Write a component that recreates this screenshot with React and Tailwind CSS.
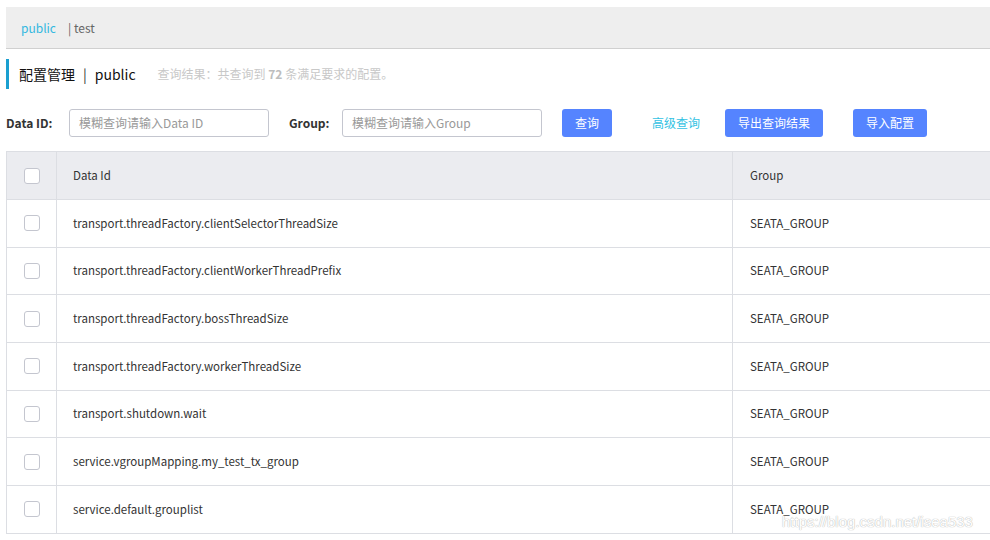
import React from 'react';

const rows = [
  'transport.threadFactory.clientSelectorThreadSize',
  'transport.threadFactory.clientWorkerThreadPrefix',
  'transport.threadFactory.bossThreadSize',
  'transport.threadFactory.workerThreadSize',
  'transport.shutdown.wait',
  'service.vgroupMapping.my_test_tx_group',
  'service.default.grouplist',
];

const font = { fontFamily: '"Noto Sans CJK SC", "Noto Sans", sans-serif' };

const Checkbox = () => (
  <span className="block h-4 w-4 rounded-[3px] border border-[#c4c6cf] bg-white" />
);

const App = () => {
  return (
    <div className="relative h-[540px] w-[990px] overflow-hidden bg-white text-[#333]" style={font}>
      <div className="pl-[6px] pt-[7px]">
        {/* namespace bar */}
        <div className="flex h-[42px] items-center border-b border-[#d0d0d0] bg-[#eeeeee] pl-[15px] text-[12px]">
          <span className="text-[#33b8e0]">public</span>
          <span className="ml-[12px] text-[#666]">| test</span>
        </div>

        {/* title */}
        <div className="mt-[10px] flex h-[30px] items-center border-l-[3px] border-[#1a9fd0] pl-[10px]">
          <span className="text-[14px] text-[#111]">配置管理</span>
          <span className="mx-[8px] text-[14px] text-[#333]">|</span>
          <span className="text-[14px] text-[#111]">public</span>
          <span className="ml-[22px] text-[12px] text-[#c8c8c8]">
            查询结果：共查询到 <b className="font-bold text-[#bdbdbd]">72</b> 条满足要求的配置。
          </span>
        </div>

        {/* search */}
        <div className="mt-[20px] flex h-[28px] items-center text-[12px]">
          <span className="w-[63px] font-bold text-[#333]">Data ID:</span>
          <div className="flex h-[28px] w-[200px] items-center rounded-[3px] border border-[#c4c6cf] pl-[9px] text-[#999]">
            模糊查询请输入Data ID
          </div>
          <span className="ml-[20px] w-[53px] font-bold text-[#333]">Group:</span>
          <div className="flex h-[28px] w-[200px] items-center rounded-[3px] border border-[#c4c6cf] pl-[9px] text-[#999]">
            模糊查询请输入Group
          </div>
          <button className="ml-[20px] h-[28px] w-[50px] rounded-[3px] bg-[#5584ff] text-white">查询</button>
          <span className="ml-[40px] text-[#33c2e3]">高级查询</span>
          <button className="ml-[25px] h-[28px] w-[98px] rounded-[3px] bg-[#5584ff] text-white">导出查询结果</button>
          <button className="ml-[30px] h-[28px] w-[74px] rounded-[3px] bg-[#5584ff] text-white">导入配置</button>
        </div>

        {/* table */}
        <div className="mt-[14px] border-l border-t border-[#dcdee3] text-[11.5px]">
          <div className="grid h-[48px] grid-cols-[50px_676px_1fr] border-b border-[#dcdee3] bg-[#ebecf0]">
            <div className="flex items-center justify-center border-r border-[#dcdee3]">
              <Checkbox />
            </div>
            <div className="flex items-center border-r border-[#dcdee3] pl-[16px] text-[#333]">Data Id</div>
            <div className="flex items-center pl-[17px] text-[#333]">Group</div>
          </div>
          {rows.map((r) => (
            <div key={r} className="grid h-[47.7px] grid-cols-[50px_676px_1fr] border-b border-[#dcdee3]">
              <div className="flex items-center justify-center border-r border-[#dcdee3]">
                <Checkbox />
              </div>
              <div className="flex items-center border-r border-[#dcdee3] pl-[16px] text-[#333]">{r}</div>
              <div className="flex items-center pl-[17px] text-[#333]">SEATA_GROUP</div>
            </div>
          ))}
        </div>
      </div>

      <span
        className="absolute left-[782px] top-[511px] text-[15px] text-white"
        style={{ fontFamily: '"Liberation Sans", Arial, sans-serif', textShadow: '0 0 1px #bbb, 0 0 1px #bbb' }}
      >
        https://blog.csdn.net/isea533
      </span>
    </div>
  );
};

export default App;
